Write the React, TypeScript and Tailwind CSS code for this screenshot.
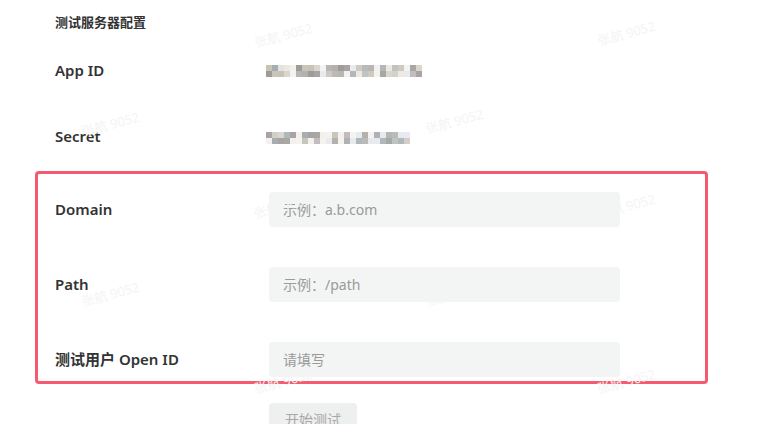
import React from "react";

const palette = [
  "#a9a3a6", "#c7c6b9", "#ede9e1", "#d3cfc8", "#b8b6b5", "#aeb2b4", "#c9c3b6", "#a8a8a3",
  "#dcd8d4", "#e8ebee", "#bfc4c2", "#f2f1ee", "#b4b0ad", "#d9d6cf", "#a7aeb0", "#cfcac1",
  "#eae9f1", "#9f9c98", "#c2bcc0", "#e1e4e0", "#b0b8bb", "#d5d1c6", "#f5f3ef", "#babbb8",
];

function Mosaic({ cols, seed }: { cols: number; seed: number }) {
  const rows = [0, 1];
  return (
    <div className="flex flex-col">
      {rows.map((r) => (
        <div key={r} className="flex">
          {Array.from({ length: cols }).map((_, c) => {
            const idx = (c * 7 + r * 11 + seed * 5 + ((c * c + seed) % 5)) % palette.length;
            return <div key={c} className="w-[6px] h-[6px]" style={{ background: palette[idx] }} />;
          })}
        </div>
      ))}
    </div>
  );
}

const marks: [number, number][] = [
  [289, 36], [632, 34], [116, 125], [460, 122], [288, 207], [632, 207],
  [116, 295], [460, 295], [289, 382], [632, 382],
];

function Row({ label, children }: { label: string; children: React.ReactNode }) {
  return (
    <div className="flex items-center h-[35px]">
      <div className="w-[214px] shrink-0 text-[15px] font-semibold text-[#333]">{label}</div>
      {children}
    </div>
  );
}

function Field({ placeholder }: { placeholder: string }) {
  return (
    <div className="w-[351px] h-[35px] rounded-[4px] bg-[#f3f4f4] flex items-center px-[14px] text-[14px] text-[#9a9a9a]">
      {placeholder}
    </div>
  );
}

export default function App() {
  return (
    <div
      className="relative w-[764px] h-[424px] overflow-hidden bg-white"
      style={{ fontFamily: '"Noto Sans", "Noto Sans CJK SC", sans-serif' }}
    >
      <div className="flex flex-col pl-[55px] pt-[12px]">
        <div className="text-[13px] leading-[20px] font-semibold text-[#333]">测试服务器配置</div>
        <div className="mt-[21px]">
          <Row label="App ID">
            <div className="-ml-[3px] mt-[1px]">
              <Mosaic cols={26} seed={1} />
            </div>
          </Row>
        </div>
        <div className="mt-[31px]">
          <Row label="Secret">
            <div className="-ml-[3px] mt-[2px]">
              <Mosaic cols={24} seed={4} />
            </div>
          </Row>
        </div>
        <div className="mt-[17px] -ml-[20px] w-[673px] border-[3px] border-[#f55a6e] rounded-[4px] pl-[17px] pt-[18px] pb-[4px] flex flex-col gap-[40px]">
          <Row label="Domain">
            <Field placeholder="示例：a.b.com" />
          </Row>
          <Row label="Path">
            <Field placeholder="示例：/path" />
          </Row>
          <Row label="测试用户 Open ID">
            <Field placeholder="请填写" />
          </Row>
        </div>
        <div className="mt-[19px] ml-[214px]">
          <div className="w-[88px] h-[32px] rounded-[4px] bg-[#eeefef] flex items-center justify-center text-[14px] text-[#a8a8a8]">
            开始测试
          </div>
        </div>
      </div>
      {marks.map(([x, y], i) => (
        <div
          key={i}
          className="pointer-events-none absolute text-[13px] text-[#f4f4f4] whitespace-nowrap -rotate-[15deg]"
          style={{ left: x - 35, top: y - 10 }}
        >
          张航 9052
        </div>
      ))}
    </div>
  );
}
